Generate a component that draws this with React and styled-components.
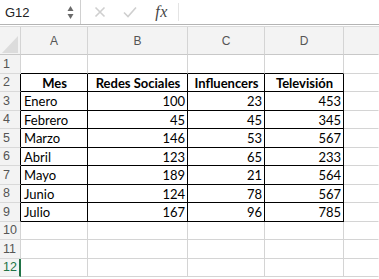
import styled, { createGlobalStyle } from "styled-components";

const GlobalStyle = createGlobalStyle`
    html, body {
        margin: 0;
        padding: 0;
        background: #ffffff;
        overflow: hidden;
    }
    * { box-sizing: border-box; }
`;

// column E is wider than the window, its letter sits off screen
const columns = ["A", "B", "C", "D", ""];

const data = [
    ["Enero", 100, 23, 453],
    ["Febrero", 45, 45, 345],
    ["Marzo", 146, 53, 567],
    ["Abril", 123, 65, 233],
    ["Mayo", 189, 21, 564],
    ["Junio", 124, 78, 567],
    ["Julio", 167, 96, 785],
];

const headers = ["Mes", "Redes Sociales", "Influencers", "Televisión"];

// excel rows land on 18/19px alternately at this zoom
const rowHeights = Array.from({ length: 12 }, (_, i) => (i % 2 === 0 ? "19px" : "18px")).join(" ");

function buildRow(n) {
    if (n === 2) return headers;
    if (n >= 3 && n <= 9) return data[n - 3];
    return [null, null, null, null];
}

function App() {
    const rows = Array.from({ length: 12 }, (_, i) => i + 1);

    return (
        <>
            <GlobalStyle />
            <Toolbar>
                <NameBox>
                    <NameText>G12</NameText>
                    <Spinner>
                        <svg width="7" height="15" viewBox="0 0 7 15">
                            <path d="M3.5 1 L6.5 6 L0.5 6 Z" fill="#6a6a6a" />
                            <path d="M3.5 14 L6.5 9 L0.5 9 Z" fill="#6a6a6a" />
                        </svg>
                    </Spinner>
                </NameBox>
                <ToolIcon>
                    <svg width="12" height="12" viewBox="0 0 12 12">
                        <path d="M1.5 1.5 L10.5 10.5 M10.5 1.5 L1.5 10.5" stroke="#cfcfcf" strokeWidth="1.6" fill="none" />
                    </svg>
                </ToolIcon>
                <ToolIcon>
                    <svg width="14" height="12" viewBox="0 0 14 12">
                        <path d="M1 6.5 L5 10.5 L13 1.5" stroke="#cfcfcf" strokeWidth="1.6" fill="none" />
                    </svg>
                </ToolIcon>
                <FxLabel>fx</FxLabel>
                <FormulaInput />
            </Toolbar>

            <Sheet $rows={rowHeights}>
                <Corner />
                {columns.map((c, i) => (
                    <ColHead key={`col${i}`} $last={i === columns.length - 1}>{c}</ColHead>
                ))}

                {rows.map((n) => {
                    const values = buildRow(n);
                    const inTable = n >= 2 && n <= 9;
                    return [
                        <RowHead key={`h${n}`} $edge={inTable} $active={n === 12}>{n}</RowHead>,
                        ...values.map((v, ci) => (
                            <Cell
                                key={`${n}-${ci}`}
                                $edgeRight={inTable}
                                $edgeBottom={n >= 1 && n <= 9}
                                $bold={n === 2}
                                $align={n === 2 ? "center" : typeof v === "number" ? "right" : "left"}
                            >
                                {v}
                            </Cell>
                        )),
                        <Cell key={`${n}-e`} $last />,
                    ];
                })}
            </Sheet>
        </>
    );
}

export default App;

const Toolbar = styled.div`
    height: 25px;
    display: flex;
    align-items: center;
    border-bottom: 1px solid #b4b4b4;
    background: #ffffff;
    margin-bottom: 1px;
`;

const NameBox = styled.div`
    width: 81px;
    height: 24px;
    display: flex;
    align-items: center;
    justify-content: space-between;
    padding: 0 6px 0 5px;
    border-right: 1px solid #d0d0d0;
`;

const NameText = styled.span`
    font: 13px/1 "Liberation Sans", Arial, sans-serif;
    color: #222222;
`;

const Spinner = styled.span`
    display: flex;
    align-items: center;
`;

const ToolIcon = styled.span`
    width: 30px;
    display: flex;
    justify-content: center;
    align-items: center;
    &:first-of-type {
        margin-left: 4px;
    }
`;

const FxLabel = styled.span`
    width: 34px;
    height: 18px;
    display: flex;
    align-items: center;
    justify-content: center;
    font: italic 16px/1 "Liberation Serif", "Times New Roman", serif;
    color: #444444;
    letter-spacing: 0.5px;
    border-right: 1px solid #e4e4e4;
`;

const FormulaInput = styled.div`
    flex: 1;
    height: 24px;
`;

const Sheet = styled.div`
    display: grid;
    grid-template-columns: 21px 67px 100px 77px 79px 1fr;
    grid-template-rows: 28px ${(p) => p.$rows};
    border-top: 1px solid #dadada;
`;

const Corner = styled.div`
    background: #f3f3f3;
    border-right: 1px solid #d4d4d4;
    border-bottom: 1px solid #c8c8c8;
    position: relative;
    &::after {
        content: "";
        position: absolute;
        right: 2px;
        bottom: 1px;
        width: 0;
        height: 0;
        border-left: 16px solid transparent;
        border-bottom: 17px solid #dcdcdc;
    }
`;

const ColHead = styled.div`
    background: #f3f3f3;
    border-right: 1px solid ${(p) => (p.$last ? "transparent" : "#d4d4d4")};
    border-bottom: 1px solid #c8c8c8;
    display: flex;
    align-items: center;
    justify-content: center;
    padding-top: 1px;
    font: 12px/1 "Liberation Sans", Arial, sans-serif;
    color: #555555;
`;

const RowHead = styled.div`
    background: #f3f3f3;
    border-right: ${(p) => (p.$active ? "2px solid #217346" : `1px solid ${p.$edge ? "#000000" : "#d4d4d4"}`)};
    border-bottom: 1px solid #d9d9d9;
    display: flex;
    align-items: center;
    padding-left: 3px;
    font: 12.5px/1 "Liberation Sans", Arial, sans-serif;
    color: ${(p) => (p.$active ? "#217346" : "#555555")};
`;

const Cell = styled.div`
    border-right: 1px solid ${(p) => (p.$edgeRight ? "#000000" : p.$last ? "transparent" : "#d4d4d4")};
    border-bottom: 1px solid ${(p) => (p.$edgeBottom ? "#000000" : "#d4d4d4")};
    display: flex;
    align-items: center;
    justify-content: ${(p) => (p.$align === "right" ? "flex-end" : p.$align === "center" ? "center" : "flex-start")};
    padding: 1px 2px 0 3px;
    font: ${(p) => (p.$bold ? "bold" : "normal")} 13px/1 Lato, "Open Sans", sans-serif;
    color: #000000;
    white-space: nowrap;
    overflow: hidden;
`;
